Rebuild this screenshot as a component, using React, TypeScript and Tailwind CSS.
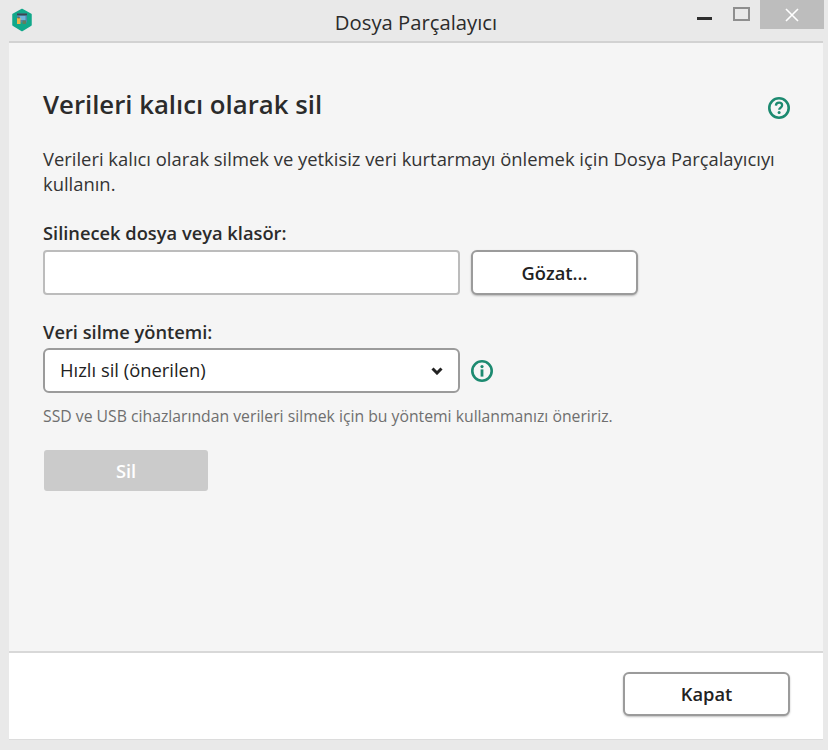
import React from "react";

function Logo() {
  return (
    <svg width="22" height="24" viewBox="0 0 22 24">
      <path d="M11 1.5 L20 6.5 V17 L11 22.5 L2 17 V6.5 Z" fill="#12a88a" stroke="#12a88a" strokeLinejoin="round" strokeWidth="1.5" />
      <rect x="6" y="5.5" width="10" height="9" fill="#4f88ab" />
      <rect x="6" y="5.5" width="10" height="1.8" fill="#3b4750" />
      <rect x="8.5" y="8" width="6" height="4" fill="#6fb4da" />
      <rect x="6" y="10" width="3.5" height="6" fill="#eeb44a" />
      <rect x="6.6" y="9.2" width="2.2" height="1.2" fill="#6a6a4a" />
      <rect x="11.5" y="12.5" width="3.5" height="3.5" fill="#5f7f60" />
    </svg>
  );
}

function Circ({ kind }: { kind: "q" | "i" }) {
  return (
    <svg width="24" height="24" viewBox="0 0 24 24" fill="none">
      <circle cx="12" cy="12" r="9.7" stroke="#1c8a70" strokeWidth="2.6" />
      {kind === "q" ? (
        <>
          <path d="M8.9 9.6c.1-1.9 1.4-2.9 3.2-2.9 1.8 0 3 1 3 2.6 0 1.2-.6 1.8-1.5 2.4-.9.6-1.4 1-1.4 2.1" stroke="#1c8a70" strokeWidth="2.3" />
          <circle cx="12.1" cy="16.6" r="1.5" fill="#1c8a70" />
        </>
      ) : (
        <>
          <circle cx="12" cy="7.6" r="1.6" fill="#1c8a70" />
          <rect x="10.6" y="10.4" width="2.8" height="7.2" fill="#1c8a70" />
        </>
      )}
    </svg>
  );
}

export default function App() {
  return (
    <div className="w-[828px] h-[750px] bg-[#e9e9e9] flex flex-col font-['Open_Sans','Noto_Sans',sans-serif] text-[#262626] overflow-hidden">
      <div className="h-[41px] shrink-0 flex items-start relative">
        <div className="ml-[11px] mt-[8px] w-[22px] h-[24px]"><Logo /></div>
        <div className="flex-1 text-center text-[20.25px] leading-[26px] mt-[9px] pr-[29px] text-[#2b2b2b]">Dosya Parçalayıcı</div>
        <div className="absolute right-[4px] top-0 flex items-start">
          <div className="w-[15px] h-[3px] bg-[#2e2e2e] mt-[17px] mr-[21px]" />
          <div className="w-[17px] h-[14px] border-2 border-[#8f8f8f] mt-[7px] mr-[10px]" />
          <div className="w-[64px] h-[29px] bg-[#bdbdbd] flex items-center justify-center">
            <svg width="14" height="14" viewBox="0 0 14 14"><path d="M1 1 L13 13 M13 1 L1 13" stroke="#fff" strokeWidth="1.6" /></svg>
          </div>
        </div>
      </div>
      <div className="ml-[9px] mr-[5px] flex-1 flex flex-col border-t-2 border-[#d2d2d2]">
        <div className="h-[608px] shrink-0 bg-[#f5f5f5] pl-[34px] pr-[20px] pt-[43px] flex flex-col">
          <div className="flex justify-between items-start h-[36px] pr-[12px]">
            <h1 className="text-[25.75px] leading-[36px] font-semibold text-[#2b2b2b]">Verileri kalıcı olarak sil</h1>
            <div className="mt-[10px]"><Circ kind="q" /></div>
          </div>
          <p className="mt-[24px] text-[18.4px] leading-[25px] text-[#333]">Verileri kalıcı olarak silmek ve yetkisiz veri kurtarmayı önlemek için Dosya Parçalayıcıyı kullanın.</p>
          <label className="mt-[25px] text-[18.3px] leading-[24px] font-semibold text-[#2b2b2b]">Silinecek dosya veya klasör:</label>
          <div className="mt-[5px] flex gap-[11px]">
            <div className="w-[417px] h-[45px] bg-white border-2 border-[#bcbcbc] rounded-[4px]" />
            <button className="w-[167px] h-[45px] bg-white border-2 border-[#9b9b9b] rounded-[6px] text-[18.3px] font-semibold text-[#222] shadow-[0_1px_2px_rgba(0,0,0,0.25)]">Gözat...</button>
          </div>
          <label className="mt-[25px] text-[18.3px] leading-[24px] font-semibold text-[#2b2b2b]">Veri silme yöntemi:</label>
          <div className="mt-[4px] flex items-center gap-[10px]">
            <div className="w-[417px] h-[45px] bg-white border-2 border-[#9b9b9b] rounded-[6px] flex items-center justify-between pl-[15px] pr-[15px] text-[18.4px] text-[#222]">
              <span className="-mt-[2px]">Hızlı sil (önerilen)</span>
              <svg width="12" height="8" viewBox="0 0 12 8" fill="none"><path d="M1.5 1.5 L6 6 L10.5 1.5" stroke="#222" strokeWidth="3" /></svg>
            </div>
            <Circ kind="i" />
          </div>
          <p className="mt-[12px] text-[15.75px] leading-[22px] text-[#6f6f6f]">SSD ve USB cihazlarından verileri silmek için bu yöntemi kullanmanızı öneririz.</p>
          <button className="mt-[23px] ml-[1px] w-[164px] h-[41px] bg-[#cbcbcb] rounded-[3px] text-white text-[18.3px] font-semibold">Sil</button>
        </div>
        <div className="h-[2px] shrink-0 bg-[#d8d8d8]" />
        <div className="h-[87px] shrink-0 bg-white flex items-center justify-end pr-[33px] pb-[5px] border-b border-[#dcdcdc]">
          <button className="w-[167px] h-[44px] bg-white border-2 border-[#9b9b9b] rounded-[6px] text-[18.3px] font-semibold text-[#222] shadow-[0_1px_2px_rgba(0,0,0,0.25)]">Kapat</button>
        </div>
      </div>
    </div>
  );
}
